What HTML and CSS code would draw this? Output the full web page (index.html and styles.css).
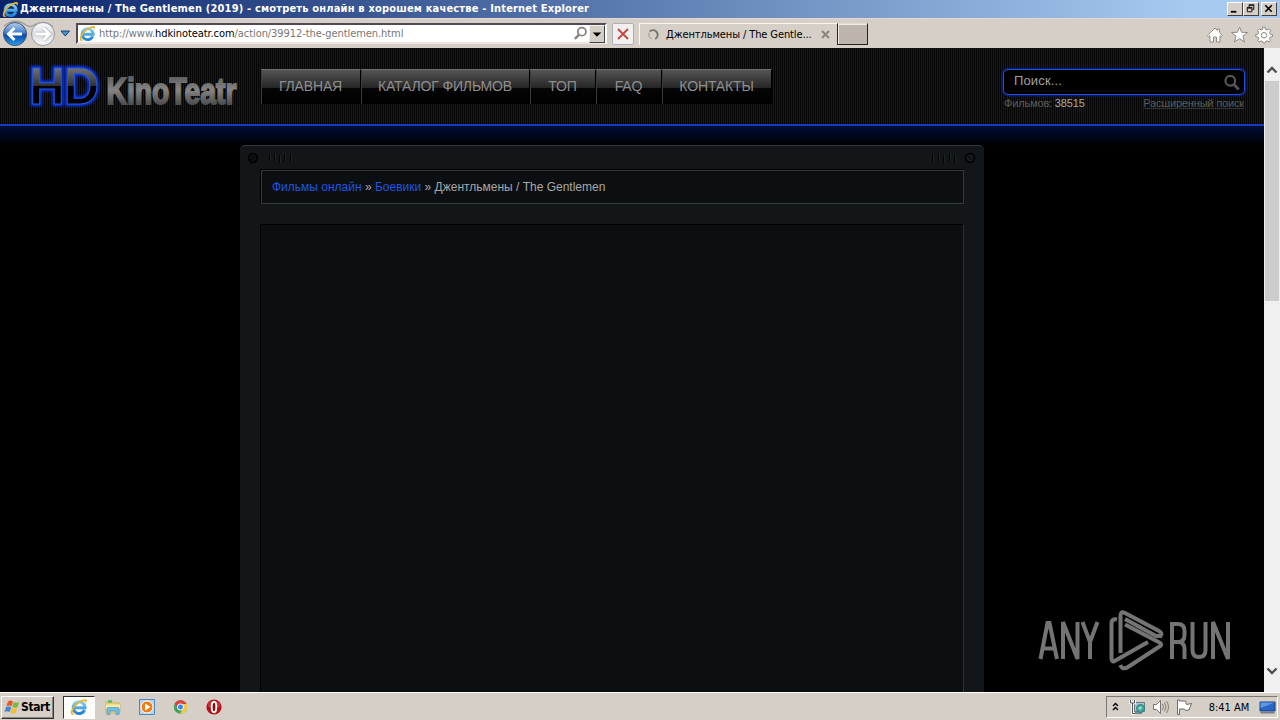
FILE: index.html
```html
<!DOCTYPE html>
<html lang="ru">
<head>
<meta charset="utf-8">
<title>Джентльмены / The Gentlemen (2019)</title>
<link rel="stylesheet" href="styles.css">
</head>
<body>
<svg class="defs" aria-hidden="true">
  <defs>
    <linearGradient id="ieBlue" x1="0" y1="0" x2="0" y2="1"><stop offset="0" stop-color="#7fd0fa"/><stop offset="1" stop-color="#1f83d6"/></linearGradient>
    <linearGradient id="btnBlue" x1="0" y1="0" x2="0" y2="1"><stop offset="0" stop-color="#b7cdea"/><stop offset=".45" stop-color="#3f7fd0"/><stop offset=".55" stop-color="#0b49a6"/><stop offset="1" stop-color="#2ba0f0"/></linearGradient>
    <linearGradient id="btnGrey" x1="0" y1="0" x2="0" y2="1"><stop offset="0" stop-color="#fafbfc"/><stop offset=".5" stop-color="#d9dde2"/><stop offset="1" stop-color="#f8fafc"/></linearGradient>
    <linearGradient id="hdFill" gradientUnits="userSpaceOnUse" x1="0" y1="11" x2="0" y2="48"><stop offset="0" stop-color="#777"/><stop offset=".5" stop-color="#333"/><stop offset=".52" stop-color="#000"/><stop offset="1" stop-color="#000"/></linearGradient>
    <linearGradient id="kinoFill" gradientUnits="userSpaceOnUse" x1="0" y1="20" x2="0" y2="48"><stop offset="0" stop-color="#5c5c5c"/><stop offset=".5" stop-color="#858585"/><stop offset="1" stop-color="#4f4f4f"/></linearGradient>
  </defs>
  <symbol id="ie" viewBox="0 0 16 16">
    <path d="M12.9 10.6A5.2 5.2 0 1 1 13.3 8.7H4.2" fill="none" stroke="url(#ieBlue)" stroke-width="2.7"/>
    <path d="M1.3 14.6C-.8 12.5 3 6.2 7.600 3.300 11.500.8 15.200.1 15 2.600 14.900 3.600 14.400 4.500 14 5.200 14.600 2.500 12.500 2.100 8.900 4.300 4.500 7 1.600 11.700 2.500 13.500 3.300 14.600 5 13.700 6 13.200 4.300 14.500 2.300 15.500 1.300 14.600Z" fill="#efb31f"/>
  </symbol>
  <symbol id="lens" viewBox="0 0 16 16"><circle cx="9.500" cy="6" r="4.300" fill="none" stroke="currentColor" stroke-width="1.900"/><path d="M6.500 9.200 2 13.700" stroke="currentColor" stroke-width="2.500"/></symbol>
</svg>

<header class="titlebar">
  <svg class="title-icon"><use href="#ie"/></svg>
  <h1 class="title-text">Джентльмены / The Gentlemen (2019) - смотреть онлайн в хорошем качестве - Internet Explorer</h1>
  <div class="win-buttons">
    <svg class="win-btn" viewBox="0 0 15 13"><path d="M3 9.500h6" stroke="#000" stroke-width="2"/></svg>
    <svg class="win-btn" viewBox="0 0 15 13"><path d="M5.500 5V2.500h5V7H9M5 2h6M3.500 5.500h5v4h-5zM3 5h6" fill="none" stroke="#000"/></svg>
    <svg class="win-btn win-close" viewBox="0 0 15 13"><path d="m3.500 2.500 7 7m0-7-7 7" stroke="#000" stroke-width="1.700"/></svg>
  </div>
</header>

<div class="toolbar">
  <svg class="nav-pair" width="56" height="30" viewBox="0 0 56 30">
    <path d="M4 7Q15-2 26 6 30 9 34 6 45 0 53 8" fill="none" stroke="#a5a19d" stroke-width="1.500"/>
    <circle cx="15" cy="15" r="11.500" fill="url(#btnBlue)" stroke="#42536e"/>
    <path d="M22 15H9M14.500 9l-6 6 6 6" fill="none" stroke="#fff" stroke-width="3"/>
    <circle cx="43" cy="15" r="11.500" fill="url(#btnGrey)" stroke="#9298a0"/>
    <path d="M36 15h13M43.500 9l6 6-6 6" fill="none" stroke="#b4b8bd" stroke-width="4.400"/>
    <path d="M36 15h13M43.500 9l6 6-6 6" fill="none" stroke="#fff" stroke-width="2.800"/>
  </svg>
  <svg class="nav-more" width="11" height="7" viewBox="0 0 11 7"><path d="M1 1h8.500L5.250 6z" fill="#3c9ad8" stroke="#17406e"/></svg>
  <div class="address">
    <svg class="addr-icon"><use href="#ie"/></svg>
    <span class="url">http://www.<b>hdkinoteatr.com</b>/action/39912-the-gentlemen.html</span>
    <svg class="addr-lens"><use href="#lens"/></svg>
    <svg class="addr-drop" viewBox="0 0 12 15"><path d="M2 6h8L6 10z"/></svg>
  </div>
  <svg class="stop" viewBox="0 0 20 20"><path d="m5 5 10 10M15 5 5 15" stroke="#c5453f" stroke-width="1.800"/></svg>
  <div class="tab">
    <svg class="spinner" viewBox="0 0 14 14"><path d="M3 3.800A5 5 0 1 1 8.800 11.800" fill="none" stroke="#77736c" stroke-width="2"/><path d="M2.300 5A5 5 0 0 0 5 11.500" fill="none" stroke="#aaa69e" stroke-width="1.500"/></svg>
    <span class="tab-text">Джентльмены / The Gentle...</span>
    <svg class="tab-close" viewBox="0 0 9 9"><path d="m1 1 7 7m0-7L1 8" stroke="#88837b" stroke-width="1.900"/></svg>
  </div>
  <div class="new-tab"></div>
  <svg class="tools" width="66" height="18" viewBox="0 0 66 18" fill="#fff" stroke="#8f8a84">
    <path d="M.5 9.500 8 2l2.500 2.500V3h2v3.500l3 3-1 1.200-1.500-1V16H9.500v-5h-3v5H3V9.700l-1.500 1z"/>
    <path d="m32.500 1 2.100 5.300 5.900.2-4.600 3.600 1.700 5.900-5.100-3.400-5.100 3.400 1.700-5.900-4.600-3.600 5.900-.2z"/>
    <path d="m56 1.500.4 2.200-1.900.8L52.700 3.300 51 5l1.200 1.900-.8 1.800-2.200.4v2l2.200.4.800 1.800L51 15.100l1.700 1.500 1.800-1.200 1.900.8.400 1.300h1.600l.4-1.300 1.900-.8 1.800 1.200 1.700-1.500-1.200-1.800.8-1.800 2.200-.4v-2l-2.200-.4-.8-1.800L64.200 5l-1.700-1.700-1.800 1.200-1.900-.8-.4-2.200z" transform="translate(-.5 -.5)"/>
    <circle cx="57" cy="9.300" r="2.800"/>
  </svg>
</div>

<main class="viewport">
  <div class="page">
    <div class="site-head">
      <svg class="logo" width="230" height="66" viewBox="0 0 230 66">
        <g font-weight="bold" font-size="52">
          <g class="hd-glow"><text x="19.500" y="48" textLength="35" lengthAdjust="spacingAndGlyphs">H</text><text x="54" y="48" textLength="35" lengthAdjust="spacingAndGlyphs">D</text></g>
          <g class="hd"><text x="19.500" y="48" textLength="35" lengthAdjust="spacingAndGlyphs">H</text><text x="54" y="48" textLength="35" lengthAdjust="spacingAndGlyphs">D</text></g>
        </g>
        <text class="kino" x="96.500" y="47.500" font-size="36" font-weight="bold" textLength="130" lengthAdjust="spacingAndGlyphs">KinoTeatr</text>
      </svg>
      <nav class="menu">
        <a class="m1">ГЛАВНАЯ</a><a class="m2">КАТАЛОГ ФИЛЬМОВ</a><a class="m3">ТОП</a><a class="m4">FAQ</a><a class="m5">КОНТАКТЫ</a>
      </nav>
      <div class="search">
        <div class="search-box"><span>Поиск...</span><svg class="search-lens"><use href="#lens"/></svg></div>
        <div class="search-info"><span>Фильмов: <b>38515</b></span><a>Расширенный поиск</a></div>
      </div>
    </div>
    <div class="body">
      <div class="panel">
        <div class="panel-top">
          <svg width="46" height="12" viewBox="0 0 46 12"><circle cx="6" cy="6" r="4.300" fill="#0d1012" stroke="#020303" stroke-width="1.800"/><path d="m4 8 4-4" stroke="#020303"/><path d="M22.500 3v6M27.500 2v8M32.500 3v8M37.500 3v8M43.500 2v8" stroke="#020303"/><path d="M23.500 3v6M28.500 2v8M33.500 3v8M38.500 3v8M44.500 2v8" stroke="#1d2225"/></svg>
          <svg width="46" height="12" viewBox="0 0 46 12"><path d="M2.500 2v8M8.500 3v8M13.500 3v8M19.500 2v8M24.500 3v8" stroke="#020303"/><path d="M3.500 2v8M9.500 3v8M14.500 3v8M20.500 2v8M25.500 3v8" stroke="#1d2225"/><circle cx="40" cy="6" r="4.300" fill="#171b1e" stroke="#020303" stroke-width="1.800"/><path d="m38 4 4 4" stroke="#020303"/></svg>
        </div>
        <div class="crumbs"><a>Фильмы онлайн</a> » <a>Боевики</a> » Джентльмены / The Gentlemen</div>
        <div class="content"></div>
      </div>
    </div>
    <svg class="watermark" width="194" height="64" viewBox="0 0 194 64">
      <g fill="none" stroke="#747474" stroke-width="4">
        <path d="M2.500 50 9.500 14h2L19 50M5 39.500h11.500M25 50V13l14.500 37V13M44.500 13l7.500 20v17M52 33l7.500-20"/>
        <path d="M134 50V15h6q6.500 0 6.500 7v4q0 7-6.500 7h-6M140 33q6.500 0 6.500 7v10M154.500 13v28q0 7 6.500 7t6.500-7V13M175 50V13l15 37V13"/>
        <path d="M79 10.500Q73.500 9 73.500 15V49.500Q73.500 54 77.500 51.500L110 33" stroke-width="4"/>
        <path d="M82.500 44V7Q82.500 1.500 87 4L121 22Q125 24.500 122.500 27H118L87 10" stroke-width="4"/>
        <path d="M87 15.500 121.500 33.500Q125 35.500 121.500 37.500L90 58Q84 61.500 82.500 56" stroke-width="4"/>
      </g>
    </svg>
  </div>
  <div class="scrollbar">
    <svg class="arrow" viewBox="0 0 12 8"><path d="M1.500 6.500 6 2l4.500 4.500" fill="none" stroke="#505050" stroke-width="2.400"/></svg>
    <div class="thumb"></div>
    <svg class="arrow arrow-down" viewBox="0 0 12 8"><path d="M1.500 1.500 6 6l4.500-4.500" fill="none" stroke="#505050" stroke-width="2.400"/></svg>
  </div>
</main>

<footer class="taskbar">
  <button class="start">
    <svg width="17" height="16" viewBox="0 0 17 16"><path d="M4 2.500q2.500-2 5 0L7.500 7.300Q5 5.500 2.300 7.300z" fill="#e5582b"/><path d="M9.800 3q2.500 1.500 5.500 0l-1.800 5q-2.500 1.500-5.200-.200z" fill="#7bb83c"/><path d="M2 8.300q2.700-1.800 5.200 0L5.700 13Q3 11.500.5 13z" fill="#3f86d8"/><path d="M8 8.800q2.700 1.700 5.200.3l-1.500 4.700q-2.700 1.400-5.200-.3z" fill="#f5bb28"/></svg>
    <span>Start</span>
  </button>
  <div class="task-ie"><svg width="18" height="18"><use href="#ie"/></svg></div>
  <div class="pinned">
    <svg width="16" height="16" viewBox="0 0 16 16"><path d="M1 2.500h6l1 1.500h7v10H1z" fill="#edcf6c" stroke="#caa94c" stroke-width=".6"/><path d="M3 1h4v3H3z" fill="#64b978"/><path d="M1 5.500h14v4H1z" fill="#f8e9a8"/><path d="M2 15.500V10q0-1.500 1.500-1.500h9Q14 8.500 14 10v5.500h-3V12H5v3.500z" fill="#72bfe6" stroke="#3d8fc2" stroke-width=".6"/></svg>
    <svg width="16" height="16" viewBox="0 0 16 16"><path d="M.5.5h15v15H.5z" fill="#b6d4ee" stroke="#4f86bb"/><circle cx="8" cy="8" r="6" fill="#f07d16" stroke="#fff"/><path d="m6 4.500 5.500 3.500L6 11.500z" fill="#fff"/></svg>
    <svg width="15" height="14" viewBox="0 0 14 14"><circle cx="7" cy="7" r="6.700" fill="#3ea556"/><path d="M1.200 3.600A6.700 6.700 0 0 1 13 4H7L4 8z" fill="#db4437"/><path d="M13 4A6.700 6.700 0 0 1 6.500 13.700L10 7.500 9 4z" fill="#f8cb3d"/><circle cx="7" cy="7" r="3.100" fill="#4384f3" stroke="#fff" stroke-width="1"/></svg>
    <svg width="16" height="16" viewBox="0 0 16 16"><circle cx="8" cy="8" r="7.600" fill="#b61018"/><path d="M2 4.500q6-6 12 0V8H2z" fill="#d64a4c" opacity=".6"/><ellipse cx="8" cy="8" rx="2.300" ry="5.300" fill="#8b0b10" stroke="#fff" stroke-width="1.900"/></svg>
  </div>
  <div class="tray">
    <svg class="chev" width="7" height="10" viewBox="0 0 7 10"><path d="M1 4 3.500 1.500 6 4M1 8 3.500 5.500 6 8" fill="none" stroke="#000" stroke-width="1.400"/></svg>
    <svg width="17" height="16" viewBox="0 0 17 16"><path d="M5.500 3.500h10v9h-10z" fill="#a9c8cd" stroke="#697b80"/><path d="M5 13h8v2H5z" fill="#748b8c"/><path d="M1.500 1v3h4V1M3.500 4v10.500H6" fill="none" stroke="#fff" stroke-width="2.600"/><path d="M1.500 1v3h4V1M3.500 4v10.500H6" fill="none" stroke="#555"/><circle cx="11.500" cy="9.500" r="4" fill="#42a8a5" stroke="#367b83"/><path d="m9 9 3-2 1 2-2 2z" fill="#9be2b3"/></svg>
    <svg class="vol" width="17" height="16" viewBox="0 0 17 16"><path d="M1.500 5.500h3l4-4v13l-4-4h-3z" fill="#fff" stroke="#77736d"/><path d="M10.500 5q2 3 0 6M12.500 3.500q3 4.500 0 9M14.500 2q4 6 0 12" fill="none" stroke="#84807a"/></svg>
    <svg class="flag" width="17" height="16" viewBox="0 0 17 16"><path d="M1.500 1v14.500h2V10h5l1 1.500 3.500-.500 2.500-6.500-5 1L9.500 2h-6V1z" fill="#fff" stroke="#6d6963"/></svg>
    <span class="clock">8:41 AM</span>
    <svg width="17" height="13" viewBox="0 0 17 13"><path d="M1 1h15v9H1z" fill="#2867c4" stroke="#173f83"/><path d="M1.500 1.500h14L1.500 7z" fill="#5d98e4"/><path d="M1 11h15l-1 1.500H2z" fill="#777e88"/></svg>
  </div>
</footer>
</body>
</html>
```
FILE: styles.css
```css
* { box-sizing: border-box; }
body {
  margin: 0; width: 1280px; height: 720px; overflow: hidden;
  display: flex; flex-direction: column; background: #d5cfc7;
  font-family: "DejaVu Sans Condensed", "DejaVu Sans", sans-serif; font-size: 11px;
}
svg { display: block; flex: none; }
.defs { position: absolute; width: 0; height: 0; }

.titlebar {
  height: 18px; flex: none; display: flex; align-items: center;
  padding: 0 3px 0 2px; background: linear-gradient(90deg, #0a246a, #a6caf0 93%);
}
.title-icon { width: 17px; height: 17px; margin-right: 1px; }
.title-text {
  margin: 0; flex: 1; color: #fff; font-size: 11px; line-height: 18px;
  font-weight: bold; white-space: nowrap; letter-spacing: .18px;
}
.win-buttons { display: flex; }
.win-btn {
  width: 16px; height: 14px; background: #d5cfc7;
  border: 1px solid; border-color: #fff #404040 #404040 #fff;
}
.win-close { margin-left: 2px; }

.toolbar { height: 30px; flex: none; display: flex; align-items: center; background: #d5cfc7; border-top: 1px solid #e4d9d0; }
.nav-more { margin: 0 5px 0 4px; }
.address {
  width: 531px; height: 21px; display: flex; align-items: center; background: #fff;
  border: 2px solid; border-color: #514a55 #fff #efe5e0 #514a55; padding: 0 0 0 1px;
}
.addr-icon { width: 17px; height: 17px; margin-right: 3px; }
.url { flex: 1; color: #777; white-space: nowrap; letter-spacing: -.07px; }
.url b { color: #000; font-weight: normal; }
.addr-lens { width: 15px; height: 15px; color: #85817d; margin-right: 1px; }
.addr-drop { width: 16px; height: 18px; background: #d5cfc7; border: 1px solid; border-color: #f5f0e8 #444 #444 #f5f0e8; }
.stop { width: 22px; height: 22px; margin-left: 5px; background: #f1efef; border: 1px solid #a9b0b9; border-radius: 2px; }
.tab { width: 198px; height: 22px; margin-left: 5px; padding: 0 7px 0 7px; display: flex; align-items: center; border: 1px solid #fff7ed; border-width: 1px 0 0 1px; }
.spinner { width: 13px; height: 13px; margin-right: 6px; }
.tab-text { flex: 1; white-space: nowrap; letter-spacing: -.1px; }
.tab-close { width: 9px; height: 9px; }
.new-tab { width: 31px; height: 22px; background: #bdb4ac; border: 1px solid #222; border-top-color: #e2dcd6; box-shadow: inset 1px 1px #f1ebe5; }
.tools { margin: 3px 7px 0 auto; }

.viewport { flex: 1; display: flex; min-height: 0; }
.page { position: relative; flex: 1; overflow: hidden; background: #000; font-family: "Liberation Sans", Arial, sans-serif; }
.site-head {
  height: 78px; display: flex; align-items: flex-start; padding-left: 10px;
  background: repeating-linear-gradient(90deg, #040404 0 1px, #1a1a1a 1px 2px);
  border-bottom: 2px solid #183cc0;
}
.logo { margin-top: 8px; overflow: visible; }
.hd-glow { fill: #0838ff; stroke: #0838ff; stroke-width: 4px; filter: blur(1.800px); }
.hd { fill: url(#hdFill); stroke: #2458e0; stroke-width: 1px; }
.kino { fill: url(#kinoFill); font-family: "Liberation Sans Narrow", "Liberation Sans", sans-serif; stroke: url(#kinoFill); stroke-width: 1.800px; }
.menu { display: flex; margin: 21px 0 0 21px; }
.menu a {
  height: 35px; line-height: 33px; font-size: 14px; letter-spacing: -.15px; color: #8e8e8e; text-align: center; white-space: nowrap;
  background: linear-gradient(#555 0, #252525 18px, #050505 18px, #000 100%);
  border-top: 1px solid #707070; border-right: 1px solid #000; box-shadow: inset 1px 0 #3c3c3c;
}
.m1 { width: 100px; } .m2 { width: 169px; } .m3 { width: 66px; } .m4 { width: 66px; } .m5 { width: 110px; }
.search { width: 242px; margin: 21px 19px 0 auto; }
.search-box {
  height: 26px; display: flex; align-items: center; justify-content: space-between; padding: 0 3px 2px 10px;
  background: #000; border: 1px solid #2350e0; border-radius: 5px; box-shadow: 0 0 3px #0838ff;
  color: #a0a0a0; font-size: 13px; letter-spacing: .15px; line-height: 22px;
}
.search-lens { width: 18px; height: 18px; color: #54565a; transform: scaleX(-1); margin-top: 3px; }
.search-info { display: flex; justify-content: space-between; font-size: 11px; line-height: 13px; margin-top: 2px; padding: 0 1px; color: #5c5c5c; letter-spacing: -.16px; }
.search-info b { font-weight: normal; color: #aaa; }
.search-info a { text-decoration: underline; text-decoration-color: #333; }
.body { padding: 19px 0 0 240px; height: 566px; background: linear-gradient(#000d38, #000 20px); }
.panel {
  width: 744px; height: 547px; padding: 0 20px; background: #121619;
  border-top: 1px solid #30353a; border-radius: 5px 5px 0 0; display: flex; flex-direction: column;
}
.panel-top { height: 24px; flex: none; display: flex; justify-content: space-between; align-items: center; margin: 0 -13px; padding-right: 1px; }
.crumbs {
  height: 34px; flex: none; padding-left: 10px; font-size: 12px; line-height: 32px; color: #a8a8a8;
  background: #0b0f11; border: 1px solid #33383b; margin: 0 0 0 1px; box-shadow: -1px -1px #000;
}
.crumbs a { color: #1d55e6; }
.content { flex: 1; margin-top: 20px; background: #0b0f11; border: 1px solid #000; border-right-color: #2c3134; border-bottom: 0; }
.watermark { position: absolute; left: 1038px; top: 561px; }

.scrollbar { width: 16px; background: #f0f0f0; display: flex; flex-direction: column; align-items: center; padding: 18px 0 17px; }
.arrow { width: 12px; height: 8px; }
.thumb { width: 14px; height: 220px; margin-top: 7px; background: #cdcdcd; }
.arrow-down { margin-top: auto; }

.taskbar { height: 28px; flex: none; display: flex; align-items: center; padding: 1px 2px 0 1px; background: #d5cfc7; border-top: 1px solid #fff; }
.start {
  width: 53px; height: 23px; padding: 0 0 0 2px; display: flex; align-items: center; background: #d5cfc7;
  border: 1px solid; border-color: #fff #333 #333 #fff; box-shadow: inset -1px -1px #8a857e;
  font: bold 12px "DejaVu Sans Condensed", "DejaVu Sans", sans-serif; letter-spacing: -.4px;
}
.task-ie { width: 32px; height: 23px; margin-left: 9px; background: #fff; border: 1px solid; border-color: #333 #fff #fff #333; display: flex; align-items: center; justify-content: center; }
.pinned { display: flex; align-items: center; gap: 18px; margin-left: 10px; }
.tray { margin-left: auto; width: 172px; height: 22px; display: flex; align-items: center; padding: 0 1px 0 5px; border: 1px solid; border-color: #7d7872 #fff #fff #7d7872; }
.chev { margin-right: 10px; }
.vol { margin-left: 6px; }
.flag { margin-left: 7px; }
.clock { flex: 1; padding-left: 6px; text-align: center; font-size: 11px; white-space: nowrap; }
```
